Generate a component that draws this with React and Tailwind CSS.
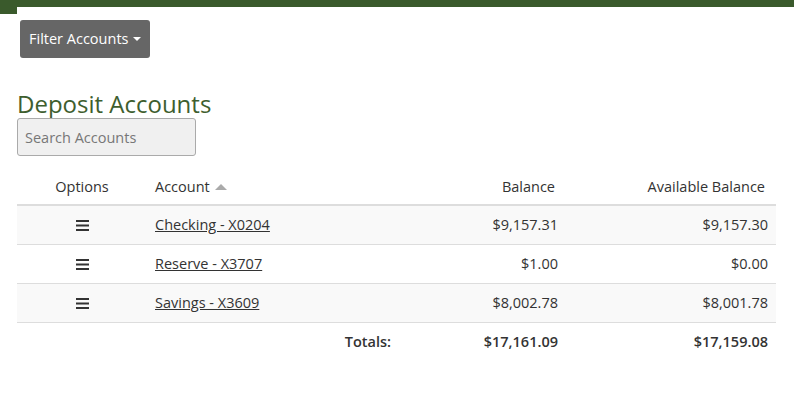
import { useState } from 'react';

const accounts = [
  { id: 1, name: 'Checking - X0204', balance: '$9,157.31', available: '$9,157.30' },
  { id: 2, name: 'Reserve - X3707', balance: '$1.00', available: '$0.00' },
  { id: 3, name: 'Savings - X3609', balance: '$8,002.78', available: '$8,001.78' },
];

function Hamburger() {
  return (
    <svg width="13" height="12" viewBox="0 0 13 12" className="inline-block">
      <rect x="0" y="0" width="13" height="2" fill="#333" />
      <rect x="0" y="4.5" width="13" height="2" fill="#333" />
      <rect x="0" y="9" width="13" height="2" fill="#333" />
    </svg>
  );
}

export default function App() {
  const [search, setSearch] = useState('');

  return (
    <div className="w-[794px] h-[394px] bg-white text-[#333] font-['Open_Sans',sans-serif] relative">
      <div className="h-[7px] bg-[#3a5a2c]" />
      <div className="absolute left-0 top-[7px] w-[17px] h-[7px] bg-[#3a5a2c]" />

      <div className="px-[17px]">
        <button className="mt-[13px] ml-[3px] h-[38px] px-[9px] rounded-[3px] bg-[#666] text-white text-[14.5px] flex items-center gap-[5px]">
          Filter Accounts
          <span className="w-0 h-0 border-l-[4px] border-r-[4px] border-t-[4px] border-l-transparent border-r-transparent border-t-white" />
        </button>

        <h2 className="mt-[31px] text-[24px] leading-[29px] text-[#3e5e2e]">Deposit Accounts</h2>

        <input
          value={search}
          onChange={e => setSearch(e.target.value)}
          placeholder="Search Accounts"
          className="w-[179px] h-[38px] px-[7px] bg-[#f0f0f0] border border-[#aaa] rounded-[3px] text-[14.5px] placeholder:text-[#777] outline-none"
        />

        <table className="mt-[13px] w-[759px] border-collapse text-[14.5px]">
          <thead>
            <tr className="h-[36px] border-b-2 border-[#ddd]">
              <th className="w-[130px] text-center font-medium">Options</th>
              <th className="w-[252px] text-left pl-[8px] font-medium">
                Account
                <span className="inline-block ml-[5px] mb-[2px] w-0 h-0 border-l-[6px] border-r-[6px] border-b-[6px] border-l-transparent border-r-transparent border-b-[#aaa]" />
              </th>
              <th className="w-[167px] text-right pr-[11px] font-medium">Balance</th>
              <th className="text-right pr-[11px] font-medium">Available Balance</th>
            </tr>
          </thead>
          <tbody>
            {accounts.map((a, i) => (
              <tr key={a.id} className={`h-[39px] border-b border-[#ddd] ${i % 2 === 0 ? 'bg-[#f9f9f9]' : 'bg-white'}`}>
                <td className="text-center"><Hamburger /></td>
                <td className="pl-[8px]"><a href="#" className="underline text-[#333]">{a.name}</a></td>
                <td className="text-right pr-[8px]">{a.balance}</td>
                <td className="text-right pr-[8px]">{a.available}</td>
              </tr>
            ))}
            <tr className="h-[40px] font-semibold">
              <td />
              <td className="text-right pr-[8px]">Totals:</td>
              <td className="text-right pr-[8px]">$17,161.09</td>
              <td className="text-right pr-[8px]">$17,159.08</td>
            </tr>
          </tbody>
        </table>
      </div>
    </div>
  );
}
